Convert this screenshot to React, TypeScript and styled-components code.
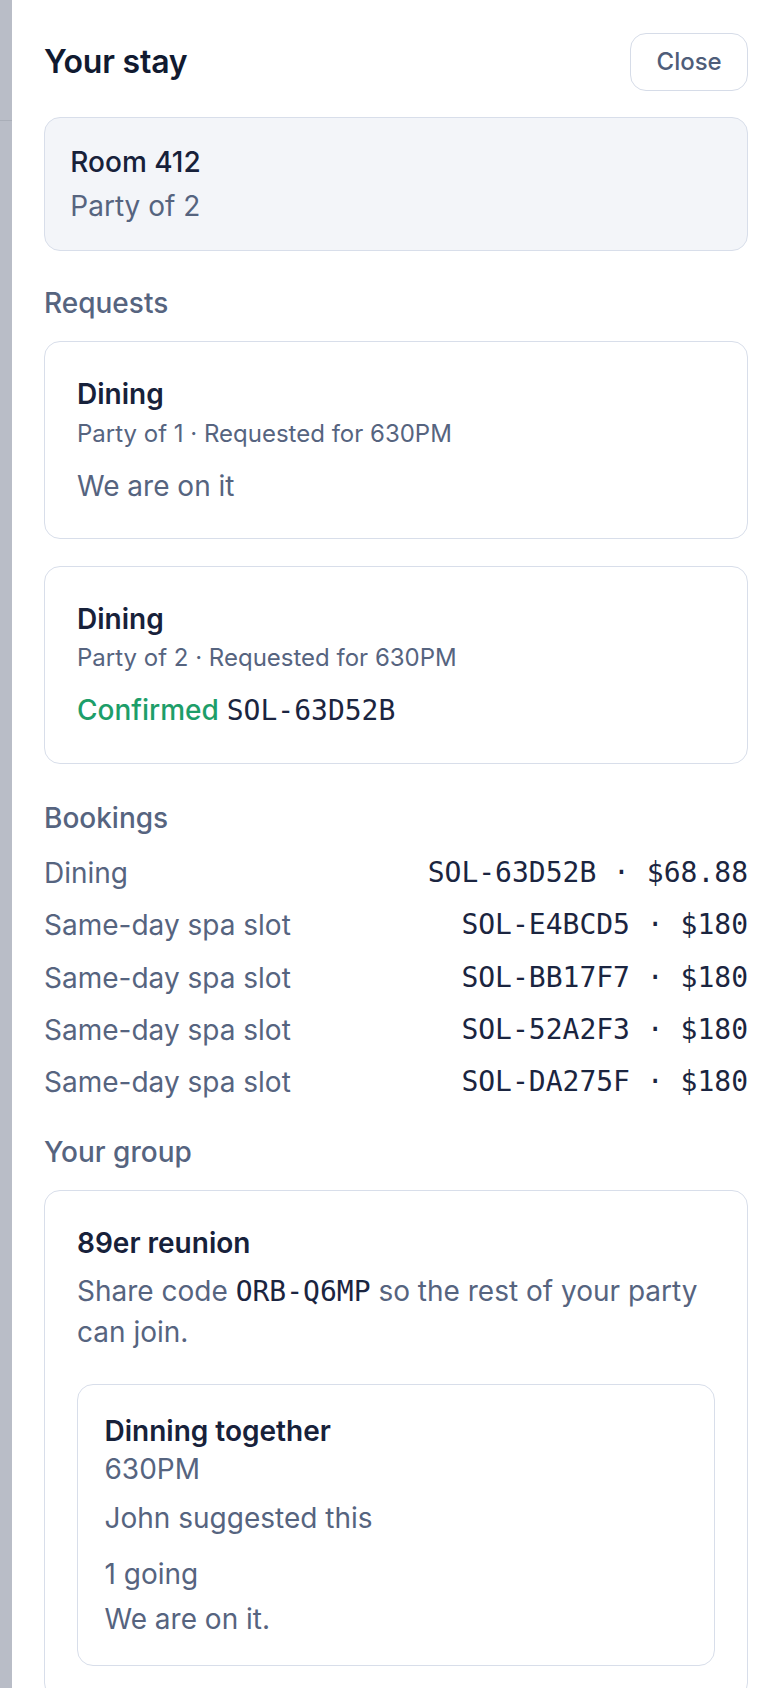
import { FC } from 'react';
import styled, { createGlobalStyle } from 'styled-components';

const GlobalStyle = createGlobalStyle`
  html, body {
    margin: 0;
    padding: 0;
    background: #ffffff;
  }
  body {
    font-family: Inter, "Noto Sans", "Liberation Sans", sans-serif;
    -webkit-font-smoothing: antialiased;
  }
`;

type Booking = { label: string; code: string; price: string };

const bookings: Booking[] = [
  { label: 'Dining', code: 'SOL-63D52B', price: '$68.88' },
  { label: 'Same-day spa slot', code: 'SOL-E4BCD5', price: '$180' },
  { label: 'Same-day spa slot', code: 'SOL-BB17F7', price: '$180' },
  { label: 'Same-day spa slot', code: 'SOL-52A2F3', price: '$180' },
  { label: 'Same-day spa slot', code: 'SOL-DA275F', price: '$180' },
];

const App: FC = () => {
  return (
    <Screen>
      <GlobalStyle />
      <Backdrop>
        <BackdropHeader />
      </Backdrop>
      <Drawer>
        <Header>
          <Title>Your stay</Title>
          <CloseButton>Close</CloseButton>
        </Header>

        <RoomBox>
          <RoomName>Room 412</RoomName>
          <RoomParty>Party of 2</RoomParty>
        </RoomBox>

        <Section>
          <SectionTitle>Requests</SectionTitle>
          <Stack>
            <Card>
              <CardTitle>Dining</CardTitle>
              <CardMeta>Party of 1 · Requested for 630PM</CardMeta>
              <CardStatus>We are on it</CardStatus>
            </Card>
            <Card>
              <CardTitle>Dining</CardTitle>
              <CardMeta>Party of 2 · Requested for 630PM</CardMeta>
              <CardStatus>
                <Confirmed>Confirmed</Confirmed> <Code>SOL-63D52B</Code>
              </CardStatus>
            </Card>
          </Stack>
        </Section>

        <Section $top={34}>
          <SectionTitle>Bookings</SectionTitle>
          <BookingList>
            {bookings.map((b) => (
              <BookingRow key={b.code}>
                <BookingLabel>{b.label}</BookingLabel>
                <Code>
                  {b.code} · {b.price}
                </Code>
              </BookingRow>
            ))}
          </BookingList>
        </Section>

        <Section $top={30}>
          <SectionTitle>Your group</SectionTitle>
          <Card>
            <CardTitle>89er reunion</CardTitle>
            <ShareText>
              Share code <Code>ORB-Q6MP</Code> so the rest of your party can join.
            </ShareText>
            <Plan>
              <PlanTitle>Dinning together</PlanTitle>
              <PlanLine>630PM</PlanLine>
              <PlanLine $gap={11.5}>John suggested this</PlanLine>
              <PlanLine $gap={18}>1 going</PlanLine>
              <PlanLine $gap={7}>We are on it.</PlanLine>
            </Plan>
          </Card>
        </Section>
      </Drawer>
    </Screen>
  );
};

export default App;

const Screen = styled.div`
  display: flex;
  height: 100vh;
  overflow: hidden;
`;

const Backdrop = styled.div`
  width: 12px;
  flex-shrink: 0;
  background: #b9bdc7;
`;

const BackdropHeader = styled.div`
  height: 120px;
  border-bottom: 1px solid #a9aeb8;
`;

const Drawer = styled.aside`
  flex: 1;
  background: #ffffff;
  padding: 33px 32px 0 32px;
  display: flex;
  flex-direction: column;
`;

const Header = styled.header`
  display: flex;
  align-items: center;
  justify-content: space-between;
`;

const Title = styled.h1`
  margin: 0;
  font-size: 32px;
  line-height: 42.7px;
  font-weight: 600;
  color: #111a30;
  letter-spacing: -0.2px;
`;

const CloseButton = styled.button`
  font-family: inherit;
  font-size: 24px;
  line-height: 37.3px;
  font-weight: 500;
  color: #4f5d79;
  background: #ffffff;
  border: 1.33px solid #d6dce8;
  border-radius: 16px;
  padding: 9.3px 25.3px;
  cursor: pointer;
`;

const RoomBox = styled.div`
  margin-top: 26px;
  background: #f3f5f9;
  border: 1.33px solid #d8deea;
  border-radius: 16px;
  padding: 23.7px 25.3px 24px;
`;

const RoomName = styled.div`
  font-size: 28px;
  line-height: 40px;
  font-weight: 500;
  color: #17213a;
`;

const RoomParty = styled.div`
  margin-top: 4.5px;
  font-size: 28px;
  line-height: 40px;
  color: #56647f;
`;

const Section = styled.section<{ $top?: number }>`
  margin-top: ${(p) => p.$top ?? 32}px;
  display: flex;
  flex-direction: column;
  gap: 18px;
`;

const SectionTitle = styled.h2`
  margin: 0;
  font-size: 28px;
  line-height: 40px;
  font-weight: 500;
  color: #56647f;
`;

const Stack = styled.div`
  display: flex;
  flex-direction: column;
  gap: 27px;
`;

const Card = styled.div`
  border: 1.33px solid #d8deea;
  border-radius: 16px;
  padding: 32px;
  background: #ffffff;
`;

const CardTitle = styled.div`
  font-size: 28px;
  line-height: 40px;
  font-weight: 600;
  color: #17213a;
`;

const CardMeta = styled.div`
  margin-top: 3.5px;
  font-size: 24px;
  line-height: 32px;
  color: #56647f;
`;

const CardStatus = styled.div`
  margin-top: 16px;
  font-size: 28px;
  line-height: 40px;
  color: #56647f;
`;

const Confirmed = styled.span`
  color: #1d9e69;
  font-weight: 500;
`;

const Code = styled.span`
  font-family: "DejaVu Sans Mono", "Liberation Mono", monospace;
  font-size: 28px;
  color: #1b2540;
  white-space: nowrap;
`;

const BookingList = styled.div`
  display: flex;
  flex-direction: column;
  gap: 12.3px;
  margin-top: -3px;
`;

const BookingRow = styled.div`
  display: flex;
  align-items: center;
  justify-content: space-between;
  line-height: 40px;
`;

const BookingLabel = styled.span`
  font-size: 28px;
  color: #56647f;
`;

const ShareText = styled.p`
  margin: 7.7px 0 0;
  font-size: 28px;
  line-height: 40px;
  color: #56647f;
`;

const Plan = styled.div`
  margin-top: 32.5px;
  border: 1.33px solid #d8deea;
  border-radius: 16px;
  padding: 26.5px;
`;

const PlanTitle = styled.div`
  font-size: 28px;
  line-height: 38px;
  font-weight: 600;
  color: #17213a;
`;

const PlanLine = styled.div<{ $gap?: number }>`
  margin-top: ${(p) => p.$gap ?? 0}px;
  font-size: 28px;
  line-height: 38px;
  color: #56647f;
`;
